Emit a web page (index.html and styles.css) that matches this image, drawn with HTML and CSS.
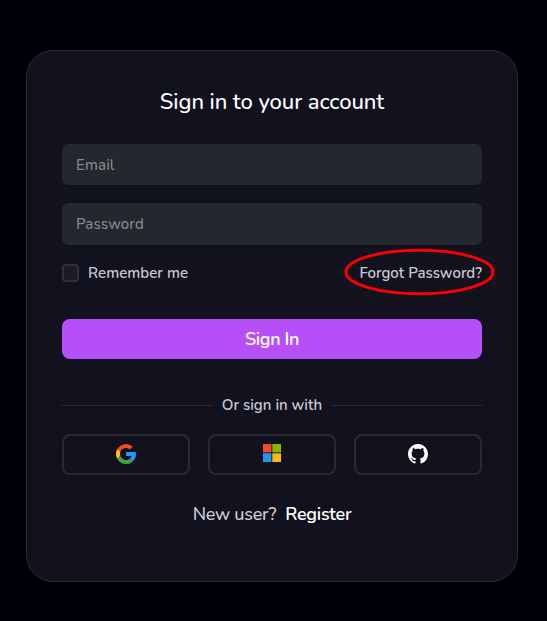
FILE: index.html
```html
<!DOCTYPE html>
<html lang="en">
<head>
<meta charset="utf-8">
<title>Sign in</title>
<link rel="stylesheet" href="styles.css">
</head>
<body>
<main class="card">
  <h1 class="title"><span>Sign in to your account</span></h1>
  <form class="form">
    <input class="field email" type="email" placeholder="Email" aria-label="Email">
    <input class="field password" type="password" placeholder="Password" aria-label="Password">
    <div class="options">
      <label class="remember"><input class="check" type="checkbox"><span>Remember me</span></label>
      <a class="forgot">Forgot Password?
        <svg class="ring" viewBox="0 0 152 48" width="152" height="48"><ellipse cx="76.500" cy="24" rx="73.500" ry="21.700" fill="none" stroke="#fc0000" stroke-width="3"/></svg>
      </a>
    </div>
    <button class="submit" type="button">Sign In</button>
  </form>
  <div class="divider"><span>Or sign in with</span></div>
  <div class="providers">
    <button class="provider" aria-label="Google">
      <svg width="20" height="20" viewBox="4 4 40 40"><path fill="#2196f3" d="M43.600 20H24v8h11.300a12 12 0 0 1-4.100 5.600l6.200 5.200C37 39.200 44 34 44 24c0-1.300-.1-2.700-.4-4z"/><path fill="#f4482c" d="m6.300 14.700 6.600 4.800A12 12 0 0 1 24 12c3.100 0 5.800 1.200 7.900 3l5.700-5.700A20 20 0 0 0 6.300 14.700z"/><path fill="#43a047" d="M24 44c5.200 0 9.900-2 13.400-5.200l-6.200-5.200A12 12 0 0 1 12.700 28l-6.500 5A20 20 0 0 0 24 44z"/><path fill="#ffc107" d="M6.300 14.700A20 20 0 0 0 6.200 33l6.500-5a12 12 0 0 1 .2-8.500z"/></svg>
    </button>
    <button class="provider" aria-label="Microsoft">
      <svg class="microsoft" width="18" height="18" viewBox="0 0 18 18"><path fill="#f1492c" d="M0 0h8.400v8.400H0z"/><path fill="#80b900" d="M9.300 0H18v8.400H9.300z"/><path fill="#2196f3" d="M0 9.300h8.400V18H0z"/><path fill="#ffb80b" d="M9.300 9.300H18V18H9.300z"/></svg>
    </button>
    <button class="provider" aria-label="GitHub">
      <svg width="20" height="20" viewBox="0 0 16 16"><path fill="#fff" d="M8 0C3.580 0 0 3.580 0 8c0 3.540 2.290 6.530 5.470 7.590.4.070.55-.17.55-.38 0-.19-.01-.82-.01-1.490-2.010.37-2.530-.49-2.690-.94-.09-.23-.48-.94-.82-1.130-.28-.15-.68-.52-.01-.53.63-.01 1.080.58 1.230.82.72 1.210 1.870.87 2.330.66.07-.52.28-.87.51-1.070-1.780-.2-3.640-.89-3.640-3.950 0-.87.31-1.590.82-2.150-.08-.2-.36-1.020.08-2.120 0 0 .67-.21 2.200.82.64-.18 1.320-.27 2-.27s1.360.09 2 .27c1.530-1.040 2.200-.82 2.200-.82.44 1.100.16 1.920.08 2.120.51.56.82 1.270.82 2.150 0 3.070-1.870 3.750-3.650 3.950.29.25.54.73.54 1.480 0 1.070-.01 1.930-.01 2.200 0 .21.15.46.55.38A8.010 8.010 0 0 0 16 8c0-4.420-3.580-8-8-8z"/></svg>
    </button>
  </div>
  <p class="register"><span class="new">New user?</span><a class="link">Register</a></p>
</main>
</body>
</html>
```
FILE: styles.css
```css
* { box-sizing: border-box; }
body {
  margin: 0;
  height: 621px;
  padding: 50px 26px;
  background: #00000d;
  color: #fff;
  font-family: Nunito, Lato, sans-serif;
  font-weight: 500;
  overflow: hidden;
}
.card {
  width: 492px;
  height: 532px;
  padding: 35px;
  border: 1px solid #292833;
  border-radius: 27px;
  background: #12111e;
}
.title {
  margin: 0;
  height: 58px;
  font-size: 22px;
  font-weight: 500;
  line-height: 32px;
  text-align: center;
  letter-spacing: -.08px;
}
.form { display: flex; flex-direction: column; }
.field {
  width: 100%;
  height: 41px;
  padding: 0 14px;
  border: 0;
  border-radius: 6px;
  background: #25272e;
  font: 500 15px Nunito, Lato, sans-serif;
  letter-spacing: .15px;
}
.field::placeholder { color: #87888c; opacity: 1; }
.password { height: 42px; margin-top: 18px; }
.options {
  display: flex;
  align-items: center;
  justify-content: space-between;
  height: 18px;
  margin-top: 19px;
  font-size: 15px;
  font-weight: 600;
  line-height: 18px;
  color: #c8c8ce;
}
.remember { display: flex; align-items: center; gap: 9px; letter-spacing: .05px; }
.check {
  appearance: none;
  width: 17px;
  height: 18px;
  margin: 0;
  border: 2px solid #30303b;
  border-radius: 4px;
  background: #1c1c28;
}
.forgot { position: relative; white-space: nowrap; }
.ring { position: absolute; right: -13px; top: -16px; }
.submit {
  height: 40px;
  margin-top: 37px;
  border: 0;
  border-radius: 8px;
  background: #b74ff8;
  color: #fff;
  font: 600 18px Nunito, Lato, sans-serif;
  letter-spacing: -.35px;
}
.divider {
  display: flex;
  align-items: center;
  gap: 9px;
  height: 20px;
  margin-top: 36px;
  font-size: 15px;
  font-weight: 600;
  color: #c8c8ce;
}
.divider::before, .divider::after { content: ""; flex: 1; height: 1px; background: #2b2a35; }
.providers { display: grid; grid-template-columns: repeat(3, 1fr); gap: 18px; margin-top: 19px; }
.provider {
  display: flex;
  align-items: center;
  justify-content: center;
  height: 41px;
  padding: 0 0 1px;
  border: 2px solid #292833;
  border-radius: 8px;
  background: transparent;
}
.microsoft { margin-top: -2px; }
.register {
  display: flex;
  justify-content: center;
  gap: 9px;
  margin: 27px 0 0;
  font-size: 18px;
  line-height: 24px;
  letter-spacing: -.25px;
}
.new { color: #ceced3; }
.link { font-weight: 600; }
```
